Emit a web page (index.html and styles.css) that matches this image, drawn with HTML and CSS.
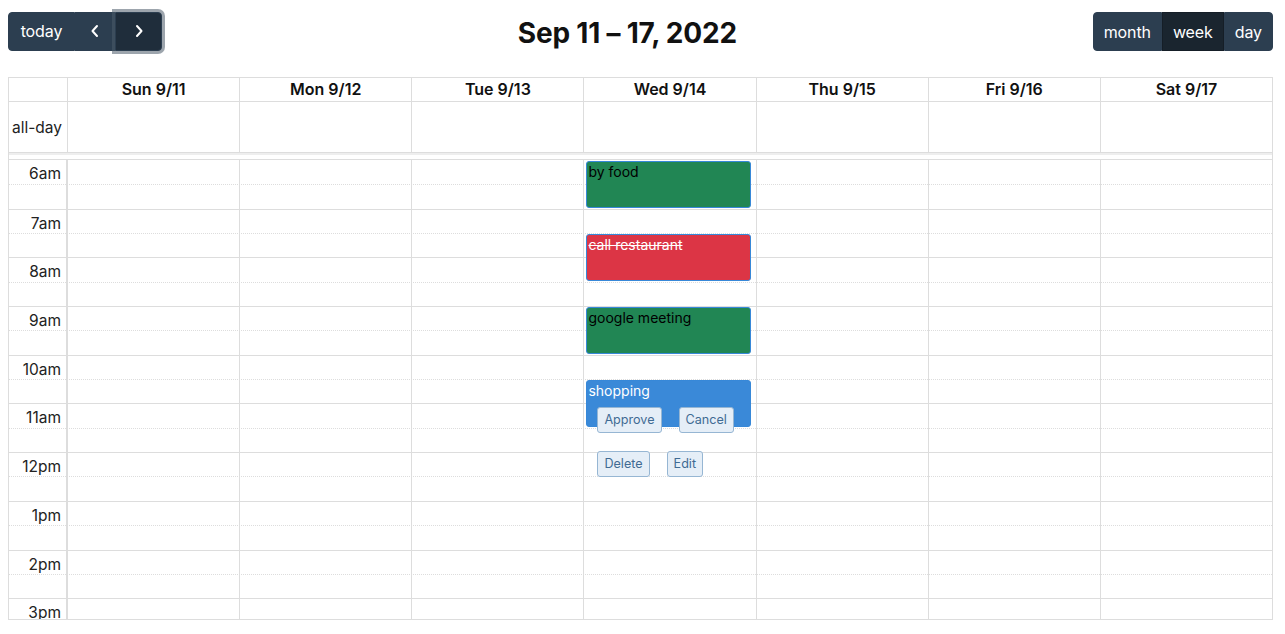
FILE: index.html
```html
<!DOCTYPE html>
<html>
<head>
<meta charset="utf-8">
<link rel="stylesheet" href="styles.css">
</head>
<body>
<div class="cal">
  <div class="toolbar">
    <div class="btn-group">
      <button class="btn today">today</button>
      <button class="btn icon prev" aria-label="prev"><svg width="16" height="16" viewBox="0 0 16 16"><path d="M10 3 L5.5 8 L10 13" fill="none" stroke="#fff" stroke-width="2" stroke-linecap="round" stroke-linejoin="round"/></svg></button>
      <button class="btn icon next focus" aria-label="next"><svg width="16" height="16" viewBox="0 0 16 16"><path d="M6 3 L10.5 8 L6 13" fill="none" stroke="#fff" stroke-width="2" stroke-linecap="round" stroke-linejoin="round"/></svg></button>
    </div>
    <h2 class="title">Sep 11 – 17, 2022</h2>
    <div class="btn-group">
      <button class="btn">month</button>
      <button class="btn active">week</button>
      <button class="btn">day</button>
    </div>
  </div>

  <div class="grid">
    <div class="head-row">
      <div class="axis"></div>
      <div class="col-head">Sun 9/11</div>
      <div class="col-head">Mon 9/12</div>
      <div class="col-head">Tue 9/13</div>
      <div class="col-head">Wed 9/14</div>
      <div class="col-head">Thu 9/15</div>
      <div class="col-head">Fri 9/16</div>
      <div class="col-head">Sat 9/17</div>
    </div>
    <div class="allday-row">
      <div class="axis allday-label">all-day</div>
      <div class="cell"></div><div class="cell"></div><div class="cell"></div><div class="cell"></div><div class="cell"></div><div class="cell"></div><div class="cell"></div>
    </div>
    <div class="divider"></div>
    <div class="scroller">
      <div class="slots">
        <div class="slot major"><div class="label">6am</div><div class="lane"></div></div>
        <div class="slot minor"><div class="label"></div><div class="lane"></div></div>
        <div class="slot major"><div class="label">7am</div><div class="lane"></div></div>
        <div class="slot minor"><div class="label"></div><div class="lane"></div></div>
        <div class="slot major"><div class="label">8am</div><div class="lane"></div></div>
        <div class="slot minor"><div class="label"></div><div class="lane"></div></div>
        <div class="slot major"><div class="label">9am</div><div class="lane"></div></div>
        <div class="slot minor"><div class="label"></div><div class="lane"></div></div>
        <div class="slot major"><div class="label">10am</div><div class="lane"></div></div>
        <div class="slot minor"><div class="label"></div><div class="lane"></div></div>
        <div class="slot major"><div class="label">11am</div><div class="lane"></div></div>
        <div class="slot minor"><div class="label"></div><div class="lane"></div></div>
        <div class="slot major"><div class="label">12pm</div><div class="lane"></div></div>
        <div class="slot minor"><div class="label"></div><div class="lane"></div></div>
        <div class="slot major"><div class="label">1pm</div><div class="lane"></div></div>
        <div class="slot minor"><div class="label"></div><div class="lane"></div></div>
        <div class="slot major"><div class="label">2pm</div><div class="lane"></div></div>
        <div class="slot minor"><div class="label"></div><div class="lane"></div></div>
        <div class="slot major"><div class="label">3pm</div><div class="lane"></div></div>
        <div class="slot minor"><div class="label"></div><div class="lane"></div></div>
      </div>
      <div class="cols">
        <div class="axis-spacer"></div>
        <div class="day"></div>
        <div class="day"></div>
        <div class="day"></div>
        <div class="day">
          <div class="event green" style="top:1px;height:47px">by food</div>
          <div class="event red strike" style="top:74px;height:47px">call restaurant</div>
          <div class="event green" style="top:147px;height:47px">google meeting</div>
          <div class="event blue" style="top:220px;height:47px">
            <div class="ev-title">shopping</div>
            <div class="actions">
              <div class="act-row"><button class="mini">Approve</button><button class="mini">Cancel</button></div>
              <div class="act-row"><button class="mini">Delete</button><button class="mini">Edit</button></div>
            </div>
          </div>
        </div>
        <div class="day"></div>
        <div class="day"></div>
        <div class="day last"></div>
      </div>
    </div>
  </div>
</div>
</body>
</html>
```

FILE: styles.css
```css
* { box-sizing: border-box; }
html, body { margin: 0; padding: 0; background: #fff; }
body {
  margin: 8px;
  font-family: Inter, "Liberation Sans", sans-serif;
  font-size: 16px;
  color: #212529;
}
.cal { width: 1265px; }
.toolbar {
  display: flex;
  justify-content: space-between;
  align-items: center;
  height: 47px;
  margin-bottom: 22px;
}
.title {
  margin: 0;
  font-size: 28px;
  font-weight: 700;
  color: #111;
  letter-spacing: -0.2px;
  padding-top: 2px;
}
.btn-group { display: flex; }
.btn {
  font-family: inherit;
  font-size: 16px;
  line-height: 24px;
  padding: 6.4px 10px;
  background: #2c3e50;
  border: 1px solid #2c3e50;
  color: #fff;
  margin: 0;
  display: flex;
  align-items: center;
  letter-spacing: -0.1px;
}
.btn-group .btn:first-child { border-radius: 4px 0 0 4px; }
.btn-group .btn:last-child { border-radius: 0 4px 4px 0; }
.btn.today { width: 67px; justify-content: center; padding: 6.4px 0; }
.btn.icon { justify-content: center; padding: 6.4px 0; height: 38.8px; }
.btn.prev { width: 40px; }
.btn.next { width: 47px; }
.btn.active { background: #1a252f; border-color: #151e27; }
.btn.focus { box-shadow: 0 0 0 3px rgba(76, 91, 106, 0.55); position: relative; background: #1f2d3b; }

.grid {
  border: 1px solid #ddd;
  width: 1265px;
}
.head-row, .allday-row {
  display: grid;
  grid-template-columns: 58px repeat(7, 1fr);
}
.head-row > div, .allday-row > div { border-left: 1px solid #ddd; }
.head-row > div:first-child, .allday-row > div:first-child { border-left: none; }
.head-row { height: 24px; border-bottom: 1px solid #ddd; }
.col-head {
  text-align: center;
  font-weight: 600;
  font-size: 16px;
  line-height: 23px;
  color: #111;
}
.allday-row { height: 50px; }
.allday-label {
  display: flex;
  align-items: center;
  justify-content: flex-end;
  padding-right: 5px;
  font-size: 15.5px;
  color: #222;
}
.divider {
  height: 8px;
  border-top: 1px solid #ddd;
  border-bottom: 1px solid #ddd;
  background: #fff;
  position: relative;
}
.divider::after {
  content: "";
  position: absolute;
  left: 0; right: 0; top: 0;
  height: 2px;
  background: #eee;
}
.scroller {
  position: relative;
  height: 459px;
  overflow: hidden;
}
.slot {
  display: grid;
  grid-template-columns: 58px 1fr;
  height: 24.35px;
}
.slot.major { border-top: 1px solid #ddd; }
.slot.minor { border-top: 1px dotted #ddd; }
.slot:first-child { border-top: none; }
.label {
  text-align: right;
  padding-right: 5px;
  padding-top: 2px;
  font-size: 15.5px;
  line-height: 24px;
  color: #222;
  border-right: 1px solid #ddd;
}
.cols {
  position: absolute;
  inset: 0;
  display: grid;
  grid-template-columns: 58px repeat(7, 1fr);
}
.day { position: relative; border-left: 1px solid #ddd; }
.event {
  position: absolute;
  left: 2px;
  right: 5px;
  border: 1px solid #3788d8;
  border-radius: 3px;
  font-size: 14px;
  line-height: 18px;
  padding: 1px 1px;
  color: #000;
}
.event.green { background: #218654; }
.event.red { background: #dc3545; color: #fff; }
.event.blue { background: #3a89d8; color: #fff; }
.strike { text-decoration: line-through; }
.ev-title { line-height: 18px; }
.actions {
  display: flex;
  flex-direction: column;
  gap: 18px;
  margin-top: 7px;
  padding-left: 9px;
}
.act-row { display: flex; gap: 17px; }
.mini {
  font-family: inherit;
  font-size: 12.6px;
  line-height: 18px;
  height: 26px;
  padding: 3px 6px;
  margin: 0;
  background: #e5eef7;
  color: #3f6b93;
  border: 1px solid #96b6d3;
  border-radius: 3px;
}
```
